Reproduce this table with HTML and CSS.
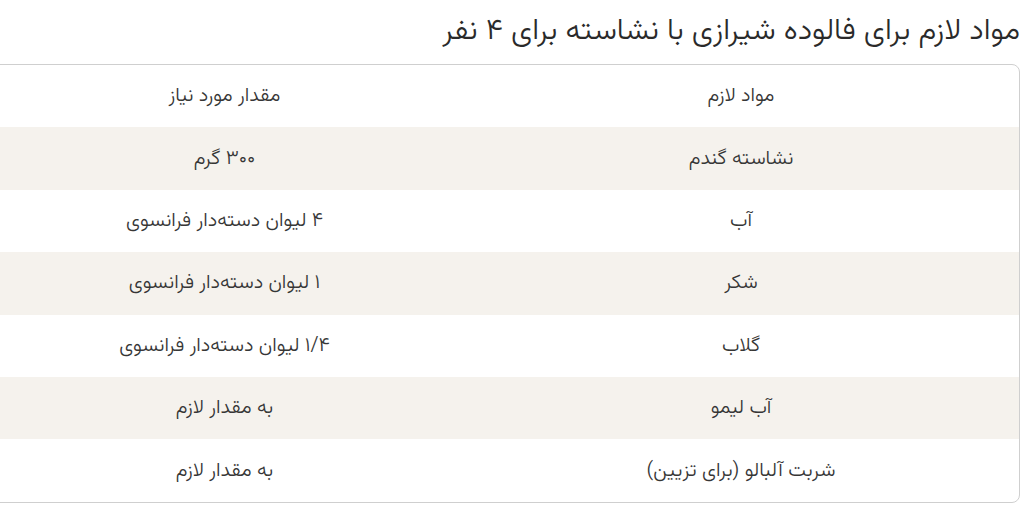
FILE: index.html
```html
<!DOCTYPE html>
<html lang="fa" dir="rtl">
<head>
  <meta charset="UTF-8">
  <meta name="viewport" content="width=device-width, initial-scale=1.0">
  <title>مواد لازم فالوده شیرازی</title>
  <link rel="stylesheet" href="styles.css">
</head>
<body>
  <div class="recipe">
    <h2 class="recipe-title">مواد لازم برای فالوده شیرازی با نشاسته برای ۴ نفر</h2>
    <div class="table-wrap">
      <table class="ingredients">
        <thead>
          <tr>
            <th class="col-item">مواد لازم</th>
            <th>مقدار مورد نیاز</th>
          </tr>
        </thead>
        <tbody>
          <tr>
            <td>نشاسته گندم</td>
            <td>۳۰۰ گرم</td>
          </tr>
          <tr>
            <td>آب</td>
            <td>۴ لیوان دسته‌دار فرانسوی</td>
          </tr>
          <tr>
            <td>شکر</td>
            <td>۱ لیوان دسته‌دار فرانسوی</td>
          </tr>
          <tr>
            <td>گلاب</td>
            <td>۱/۴ لیوان دسته‌دار فرانسوی</td>
          </tr>
          <tr>
            <td>آب لیمو</td>
            <td>به مقدار لازم</td>
          </tr>
          <tr>
            <td>شربت آلبالو (برای تزیین)</td>
            <td>به مقدار لازم</td>
          </tr>
        </tbody>
      </table>
    </div>
  </div>
</body>
</html>
```

FILE: styles.css
```css
:root {
  --text: #363636;
  --stripe: #f5f2ed;
  --border: #cfcfcf;
}
body {
  font-family: "Vazirmatn", "DejaVu Sans", sans-serif;
  margin: 0;
  padding: 0;
  background-color: #ffffff;
  color: var(--text);
}
.recipe {
  margin-right: 9px;
  width: 1035px;
}
.recipe-title {
  font-size: 30.4px;
  font-weight: 300;
  line-height: 36px;
  margin: 14px 0 14px 0;
  color: #2a2a2a;
}
.table-wrap {
  border: 1px solid var(--border);
  border-radius: 8px;
  overflow: hidden;
}
.ingredients {
  width: 100%;
  border-collapse: collapse;
  table-layout: fixed;
}
.ingredients .col-item {
  width: 556px;
}
.ingredients th,
.ingredients td {
  font-weight: 300;
  font-size: 20px;
  line-height: 24px;
  text-align: center;
  height: 62.4px;
  padding: 0;
}
.ingredients tbody tr:nth-child(odd) {
  background-color: var(--stripe);
}
```
